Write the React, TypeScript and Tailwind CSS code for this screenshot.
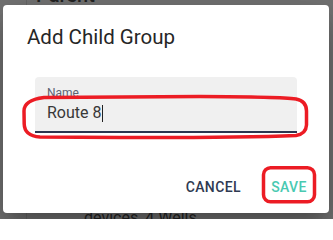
import React from 'react';

// Screenshot of a "child group" dialog with two hand-drawn red marks on top.

function Annotations() {
        return (
                <svg
                        className="pointer-events-none absolute inset-0"
                        width="333"
                        height="219"
                        viewBox="0 0 333 219"
                        fill="none"
                >
                        {/* loop round the Name field */}
                        <path
                                d="M44 97.5 L200 96.5 Q280 96.8 296 99 Q306.5 101 306.5 111 L306.5 125 Q306 134 296 135.5 Q240 137.8 120 137.5 L40 137 Q24.5 136 24.2 124 L24 111 Q24 100 44 97.5 Z"
                                stroke="#ec1c24"
                                strokeWidth="3.5"
                                strokeLinejoin="round"
                        />
                        {/* box round SAVE */}
                        <rect x="263.5" y="167.7" width="51" height="34" rx="7" stroke="#ec1c24" strokeWidth="3.5" />
                </svg>
        );
}

export default function App() {
        return (
                <div className="relative h-[219px] w-[333px] overflow-hidden bg-[#737373] font-['Roboto',sans-serif]">
                        {/* Page under the backdrop */}
                        <div className="flex h-full">
                                <div className="w-[27px] shrink-0 border-r border-[#666666]" />
                                <div className="flex flex-1 flex-col justify-between">
                                        <div className="-mt-[15px] pl-[9px] text-[20px] font-medium leading-[20px] text-[#232323]">Parent</div>
                                        <div className="-mb-[9px] pl-[57px] text-[16px] leading-[20px] text-[#262626]">devices, 4 Wells</div>
                                </div>
                        </div>

                        {/* Dialog */}
                        <div className="absolute left-[3px] top-[5px] flex h-[208px] w-[326px] flex-col rounded-[4px] bg-white shadow-[0_11px_15px_-7px_rgba(0,0,0,0.2),0_24px_38px_3px_rgba(0,0,0,0.14),0_9px_46px_8px_rgba(0,0,0,0.12)]">
                                <h2 className="px-6 py-4 text-[20.5px] font-normal leading-[32px] text-[#262626]">Add Child Group</h2>

                                <div className="mx-8 mt-2 flex h-[56px] flex-col rounded-t-[4px] border-b-2 border-[#2c3650] bg-[#f0f0f0] px-3 pt-[8px]">
                                        <span className="text-[12px] leading-[16px] text-[#5d6272]">Name</span>
                                        <div className="mt-[2px] flex items-center text-[16px] leading-[20px] text-[#383838]">
                                                Route 8
                                                <span className="ml-px inline-block h-[17px] w-px bg-[#222222]" />
                                        </div>
                                </div>

                                <div className="mt-auto flex justify-end gap-2 p-2">
                                        <button className="min-w-16 px-2 py-[6px] text-[14px] font-medium uppercase leading-[24.5px] tracking-[0.4px] text-[#2f3a52]">
                                                Cancel
                                        </button>
                                        <button className="min-w-16 px-2 py-[6px] text-[14px] font-medium uppercase leading-[24.5px] tracking-[0.4px] text-[#49c9b1]">
                                                Save
                                        </button>
                                </div>
                        </div>

                        <Annotations />
                </div>
        );
}
